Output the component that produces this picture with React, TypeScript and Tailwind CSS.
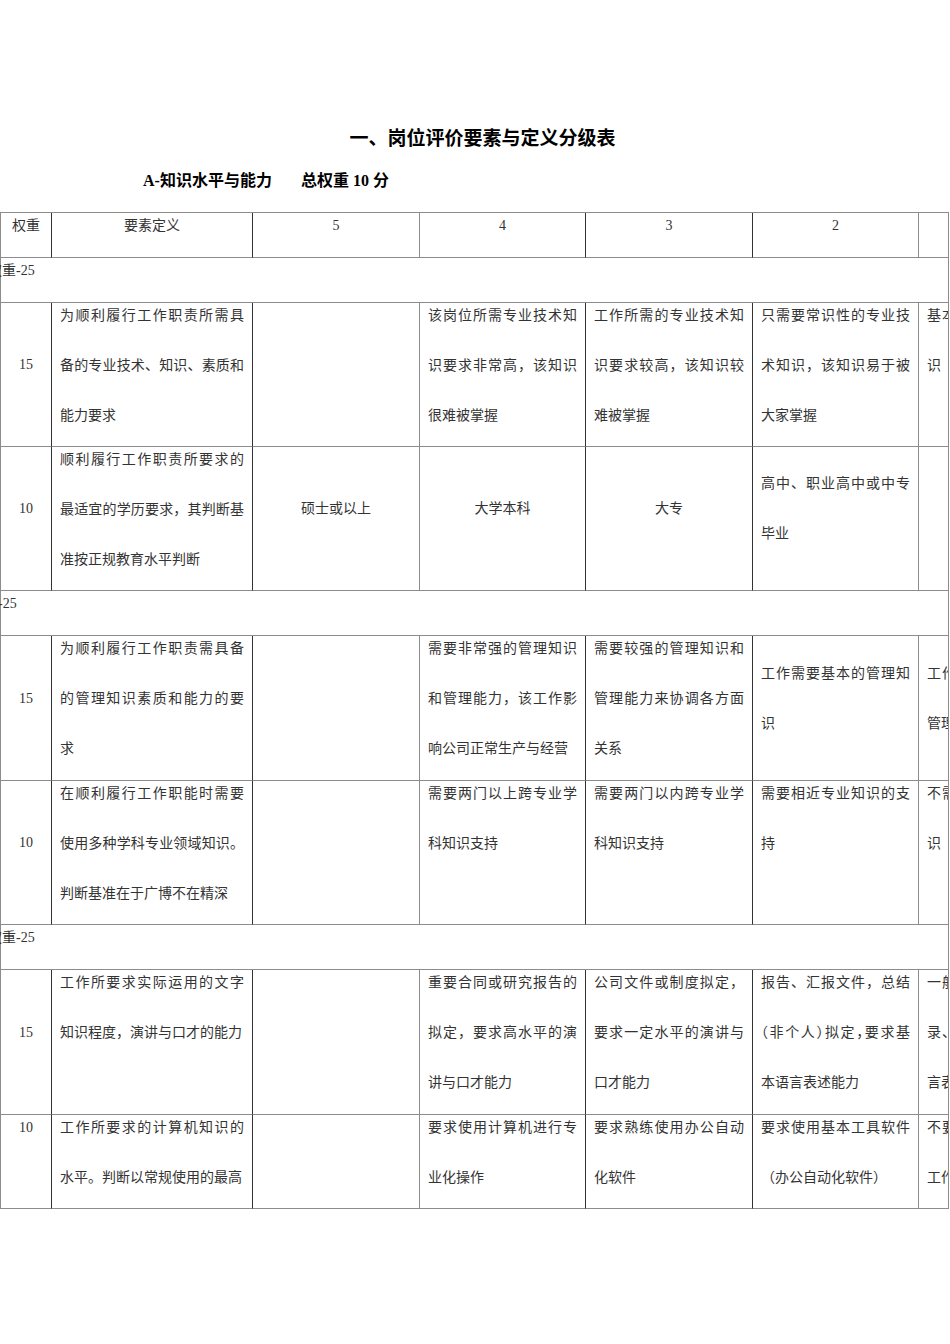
import React from 'react';

type Level = { lines: string[]; mid?: boolean; center?: boolean };
type Row = { h: string; weight: string; weightTop?: boolean; def: string[]; levels: Level[] };
type Section = { label: string; shift: string; rows: Row[] };

// lines that need half-width punctuation to fit the cell
const HALT = new Set(['（非个人）拟定，要求基']);

const colWidths = ['w-[51px]', 'w-[201px]', 'w-[167px]', 'w-[166px]', 'w-[167px]', 'w-[166px]', 'w-[167px]'];
const borderR = [
  'border-r-[#333]',
  'border-r-[#333]',
  'border-r-[#8c8c8c]',
  'border-r-[#333]',
  'border-r-[#333]',
  'border-r-[#8c8c8c]',
  'border-r-[#8c8c8c]',
];

const sections: Section[] = [
  {
    label: '权重-25',
    shift: '-ml-[13px]',
    rows: [
      {
        h: 'h-[144px]',
        weight: '15',
        def: ['为顺利履行工作职责所需具', '备的专业技术、知识、素质和', '能力要求'],
        levels: [
          { lines: [] },
          { lines: ['该岗位所需专业技术知', '识要求非常高，该知识', '很难被掌握'] },
          { lines: ['工作所需的专业技术知', '识要求较高，该知识较', '难被掌握'] },
          { lines: ['只需要常识性的专业技', '术知识，该知识易于被', '大家掌握'] },
          { lines: ['基本不需要专业技术知', '识'] },
        ],
      },
      {
        h: 'h-[144px]',
        weight: '10',
        def: ['顺利履行工作职责所要求的', '最适宜的学历要求，其判断基', '准按正规教育水平判断'],
        levels: [
          { lines: ['硕士或以上'], mid: true, center: true },
          { lines: ['大学本科'], mid: true, center: true },
          { lines: ['大专'], mid: true, center: true },
          { lines: ['高中、职业高中或中专', '毕业'], mid: true },
          { lines: [] },
        ],
      },
    ],
  },
  {
    label: '权重-25',
    shift: '-ml-[31px]',
    rows: [
      {
        h: 'h-[145px]',
        weight: '15',
        def: ['为顺利履行工作职责需具备', '的管理知识素质和能力的要', '求'],
        levels: [
          { lines: [] },
          { lines: ['需要非常强的管理知识', '和管理能力，该工作影', '响公司正常生产与经营'] },
          { lines: ['需要较强的管理知识和', '管理能力来协调各方面', '关系'] },
          { lines: ['工作需要基本的管理知', '识'], mid: true },
          { lines: ['工作需要少量的基本的', '管理知识'], mid: true },
        ],
      },
      {
        h: 'h-[144px]',
        weight: '10',
        def: ['在顺利履行工作职能时需要', '使用多种学科专业领域知识。', '判断基准在于广博不在精深'],
        levels: [
          { lines: [] },
          { lines: ['需要两门以上跨专业学', '科知识支持'] },
          { lines: ['需要两门以内跨专业学', '科知识支持'] },
          { lines: ['需要相近专业知识的支', '持'] },
          { lines: ['不需要其它专业领域知', '识'] },
        ],
      },
    ],
  },
  {
    label: '权重-25',
    shift: '-ml-[13px]',
    rows: [
      {
        h: 'h-[145px]',
        weight: '15',
        def: ['工作所要求实际运用的文字', '知识程度，演讲与口才的能力'],
        levels: [
          { lines: [] },
          { lines: ['重要合同或研究报告的', '拟定，要求高水平的演', '讲与口才能力'] },
          { lines: ['公司文件或制度拟定，', '要求一定水平的演讲与', '口才能力'] },
          { lines: ['报告、汇报文件，总结', '（非个人）拟定，要求基', '本语言表述能力'] },
          { lines: ['一般性的文件或会议记', '录、通知拟定，要求语', '言表达能力'] },
        ],
      },
      {
        h: 'h-[94px]',
        weight: '10',
        weightTop: true,
        def: ['工作所要求的计算机知识的', '水平。判断以常规使用的最高'],
        levels: [
          { lines: [] },
          { lines: ['要求使用计算机进行专', '业化操作'] },
          { lines: ['要求熟练使用办公自动', '化软件'] },
          { lines: ['要求使用基本工具软件', '（办公自动化软件）'] },
          { lines: ['不要求使用计算机进行', '工作'] },
        ],
      },
    ],
  },
];

function Lines({ lines, top }: { lines: string[]; top?: boolean }) {
  return (
    <div className={top ? '-mb-[24px]' : ''}>
      {lines.map((line, i) => (
        <div
          key={i}
          className={`h-[50px] leading-[26px] ${i < lines.length - 1 ? '[text-align-last:justify]' : ''} ${
            HALT.has(line) ? "[font-feature-settings:'halt']" : ''
          }`}
        >
          {line}
        </div>
      ))}
    </div>
  );
}

function Td({ col, lines, mid, center, span }: { col: number; lines: string[]; mid?: boolean; center?: boolean; span?: number }) {
  return (
    <td
      colSpan={span}
      className={`border-r border-b border-b-[#8c8c8c] ${borderR[col]} px-[8px] ${
        mid ? 'align-middle pt-[5px]' : 'align-top pt-0'
      } ${center ? 'text-center' : 'text-left'}`}
    >
      <Lines lines={lines} top={!mid} />
    </td>
  );
}

export default function App() {
  const header = ['权重', '要素定义', '5', '4', '3', '2', '1'];

  return (
    <div className="w-[950px] h-[1344px] bg-white overflow-hidden">
      <div className="pt-[123px] pl-[15px] text-center font-bold text-[19px] leading-[28px] text-black font-['Noto_Sans_CJK_SC',sans-serif]">
        一、岗位评价要素与定义分级表
      </div>
      <div className="mt-[18px] pl-[143px] font-bold text-[16px] leading-[24px] text-black font-['Liberation_Serif','Noto_Sans_CJK_SC',serif]">
        A-知识水平与能力<span className="ml-[29px]">总权重 10 分</span>
      </div>

      <div className="mt-[19px] w-[949px] overflow-hidden border-r border-r-[#8c8c8c]">
        <table className="table-fixed border-separate border-spacing-0 w-[1086px] border-l border-t border-[#8c8c8c] text-[14px] text-[#333] font-['Liberation_Serif','Noto_Sans_CJK_SC',serif]">
          <colgroup>
            {colWidths.map((w, i) => (
              <col key={i} className={w} />
            ))}
          </colgroup>
          <tbody>
            <tr className="h-[45px]">
              {header.map((h, i) => (
                <Td key={i} col={i} lines={[h]} center />
              ))}
            </tr>
            {sections.map((s, si) => (
              <React.Fragment key={si}>
                <tr className="h-[45px]">
                  <td colSpan={7} className="border-r border-b border-b-[#8c8c8c] border-r-[#8c8c8c] align-top p-0">
                    <div className="-mb-[24px]">
                      <div className={`h-[50px] leading-[26px] whitespace-nowrap ${s.shift}`}>{s.label}</div>
                    </div>
                  </td>
                </tr>
                {s.rows.map((r, ri) => (
                  <tr key={ri} className={r.h}>
                    <Td col={0} lines={[r.weight]} mid={!r.weightTop} center />
                    <Td col={1} lines={r.def} />
                    {r.levels.map((lv, li) => (
                      <Td key={li} col={li + 2} lines={lv.lines} mid={lv.mid} center={lv.center} />
                    ))}
                  </tr>
                ))}
              </React.Fragment>
            ))}
          </tbody>
        </table>
      </div>
    </div>
  );
}
